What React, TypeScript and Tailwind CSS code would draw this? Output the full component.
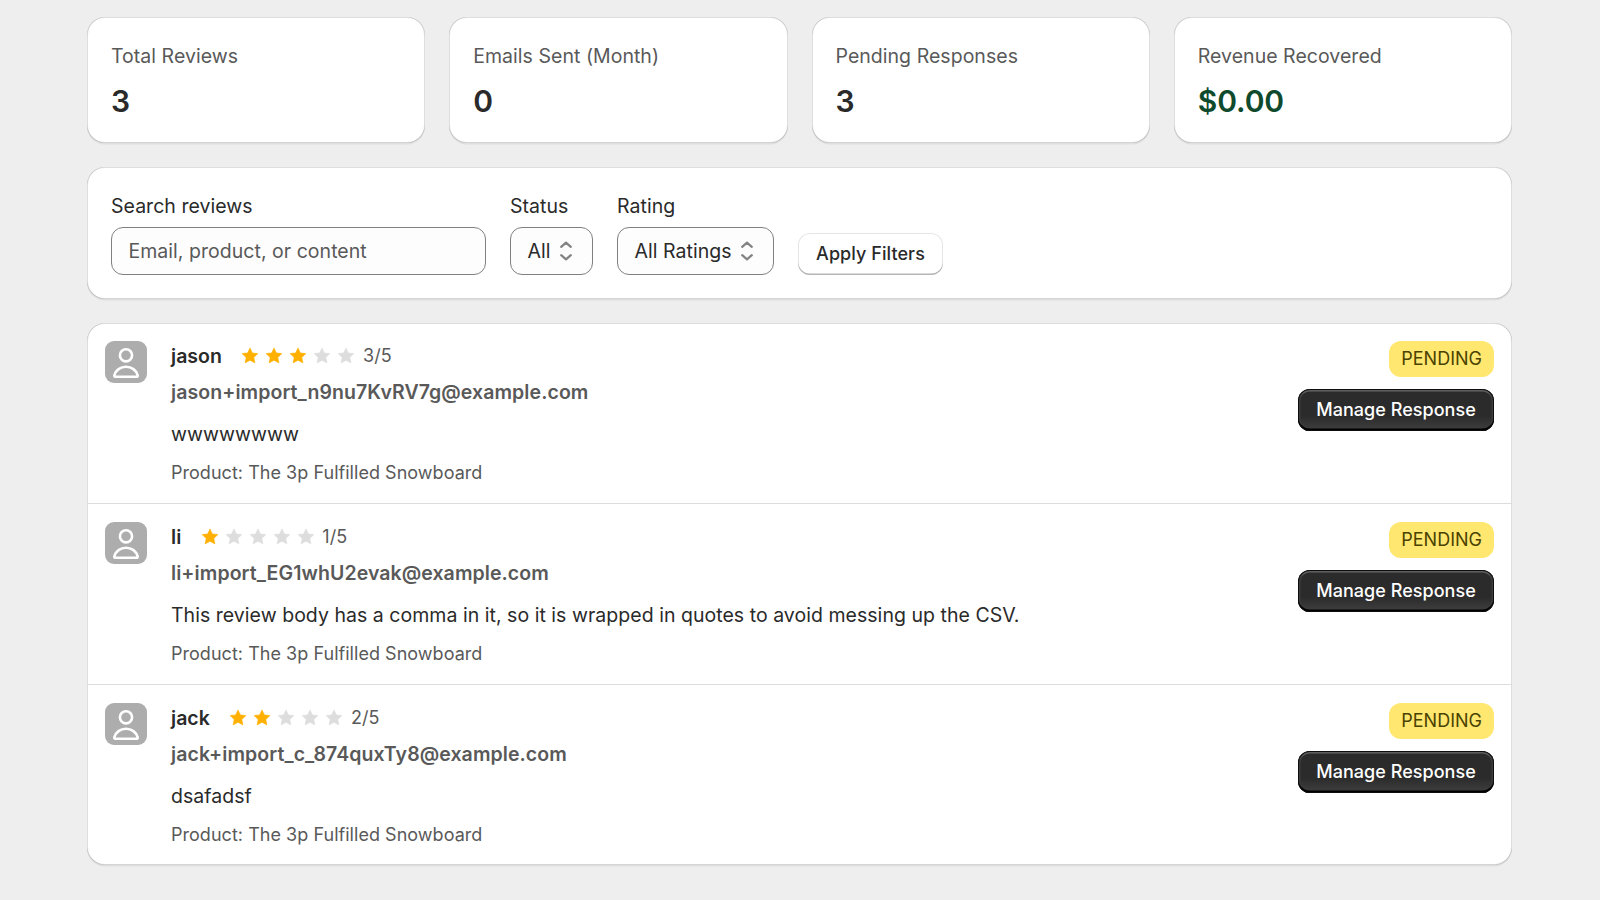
const stats = [
  { label: 'Total Reviews', value: '3' },
  { label: 'Emails Sent (Month)', value: '0' },
  { label: 'Pending Responses', value: '3' },
  { label: 'Revenue Recovered', value: '$0.00', positive: true },
]

type Review = {
  name: string
  email: string
  rating: number
  body: string
  product: string
}

const reviews: Review[] = [
  {
    name: 'jason',
    email: 'jason+import_n9nu7KvRV7g@example.com',
    rating: 3,
    body: 'wwwwwwww',
    product: 'The 3p Fulfilled Snowboard',
  },
  {
    name: 'li',
    email: 'li+import_EG1whU2evak@example.com',
    rating: 1,
    body: 'This review body has a comma in it, so it is wrapped in quotes to avoid messing up the CSV.',
    product: 'The 3p Fulfilled Snowboard',
  },
  {
    name: 'jack',
    email: 'jack+import_c_874quxTy8@example.com',
    rating: 2,
    body: 'dsafadsf',
    product: 'The 3p Fulfilled Snowboard',
  },
]

const cardClass =
  'rounded-[18px] bg-white shadow-[0_1.5px_0_rgba(26,26,26,0.07),inset_1px_0_0_rgba(0,0,0,0.13),inset_-1px_0_0_rgba(0,0,0,0.13),inset_0_-1px_0_rgba(0,0,0,0.17),inset_0_1px_0_rgba(190,190,190,0.5)]'

export default function App() {
  return (
    <div className="h-[900px] overflow-hidden bg-[#eeeeee] pt-[17px] pr-[88px] pl-[87px] font-['Inter',sans-serif] text-[19.5px] leading-[30px] font-normal tracking-[0.033px] text-[#2a2a2a]">
      <div className="flex flex-col gap-6">
        <div className="grid grid-cols-4 gap-6">
          {stats.map((s) => (
            <section key={s.label} className={`${cardClass} flex flex-col gap-3 p-6`}>
              <p className="text-[#595959]">{s.label}</p>
              <p
                className={`text-[30px] leading-9 font-semibold tracking-[-0.1px] ${
                  s.positive ? 'text-[#0f4a2d]' : 'text-[#2a2a2a]'
                }`}
              >
                {s.value}
              </p>
            </section>
          ))}
        </div>

        <section className={`${cardClass} flex items-end gap-6 p-6`}>
          <label className="flex w-[375px] flex-col gap-1.5">
            Search reviews
            <input
              className="h-12 rounded-xl border border-[#808080] bg-[#fdfdfd] px-[16.5px] outline-none placeholder:text-[#595959]"
              placeholder="Email, product, or content"
            />
          </label>
          <Select label="Status" value="All" width="w-[83px]" />
          <Select label="Rating" value="All Ratings" width="w-[157px]" />
          <button className="h-[42px] w-[145px] rounded-xl bg-white text-[18px] leading-6 font-[550] tracking-[0.07px] shadow-[inset_0_-1.5px_0_#b5b5b5,inset_0_0_0_1px_rgba(0,0,0,0.1)]">
            Apply Filters
          </button>
        </section>

        <section className={`${cardClass} divide-y divide-[#dcdcdc]`}>
          {reviews.map((r) => (
            <ReviewRow key={r.email} review={r} />
          ))}
        </section>
      </div>
    </div>
  )
}

function Select({ label, value, width }: { label: string; value: string; width: string }) {
  return (
    <div className={`flex flex-col gap-1.5 ${width}`}>
      <span>{label}</span>
      <button className="flex h-12 items-center justify-between rounded-xl border border-[#808080] bg-[#fdfdfd] pr-[11px] pl-[16.5px] whitespace-nowrap">
        {value}
        <svg
          className="-ml-1 h-[30px] w-[30px] shrink-0"
          viewBox="0 0 20 20"
          fill="none"
          stroke="#848484"
          strokeWidth="1.5"
          strokeLinecap="round"
          strokeLinejoin="round"
        >
          <path d="M6.8 7.2 10 4.4l3.2 2.8M6.8 12.8l3.2 2.8 3.2-2.8" />
        </svg>
      </button>
    </div>
  )
}

function ReviewRow({ review }: { review: Review }) {
  return (
    <article className="flex items-start gap-6 p-[18px]">
      <Avatar />
      <div className="flex flex-1 flex-col">
        <div className="flex items-center gap-[16.5px]">
          <h3 className="font-semibold">{review.name}</h3>
          <Rating value={review.rating} />
        </div>
        <p className="mt-1.5 font-semibold tracking-[0.08px] text-[#595959]">{review.email}</p>
        <p className="mt-3">{review.body}</p>
        <p className="mt-3 text-[18px] leading-6 text-[#595959]">Product: {review.product}</p>
      </div>
      <div className="flex flex-col items-end gap-3">
        <span className="flex h-9 items-center rounded-xl bg-[#ffe770] px-3 text-[18px] leading-6 tracking-normal text-[#4a4200]">
          PENDING
        </span>
        <button className="h-[42px] w-[196px] rounded-xl bg-linear-to-b from-[#2b2b2b] from-64% to-[#404040] text-[18px] leading-6 font-[550] tracking-[0.04px] text-white shadow-[inset_0_0_0_1px_#0d0d0d,inset_0_-2.5px_0_#000,inset_0_2.5px_0_#5e5e5e,inset_0_0_0_2.5px_#3c3c3c]">
          Manage Response
        </button>
      </div>
    </article>
  )
}

function Rating({ value }: { value: number }) {
  return (
    <div className="flex items-center gap-[4.5px]">
      <div className="flex">
        {[1, 2, 3, 4, 5].map((n) => (
          <svg key={n} className="h-6 w-6" viewBox="0 0 24 24" fill={n <= value ? '#ffb000' : '#dddddd'}>
            <path
              d="M12 3.9l2.35 5.05 5.55.65-4.1 3.8 1.1 5.5L12 16.2l-4.9 2.7 1.1-5.5L4.1 9.6l5.55-.65z"
              stroke={n <= value ? '#ffb000' : '#dddddd'}
              strokeWidth="0.6"
              strokeLinejoin="round"
            />
          </svg>
        ))}
      </div>
      <span className="text-[18px] leading-6 text-[#595959]">{value}/5</span>
    </div>
  )
}

function Avatar() {
  return (
    <div className="h-[42px] w-[42px] rounded-[9px] bg-[#adadad]">
      <svg viewBox="0 0 42 42" fill="none" stroke="#fff" strokeWidth="2.6" strokeLinejoin="round">
        <circle cx="21" cy="14.3" r="6.1" />
        <path d="M10.4 35.7c-.7 0-1.3-.6-1.1-1.4C10.6 29.3 15.4 25.7 21 25.7s10.4 3.6 11.7 8.6c.2.8-.4 1.4-1.1 1.4z" />
      </svg>
    </div>
  )
}
